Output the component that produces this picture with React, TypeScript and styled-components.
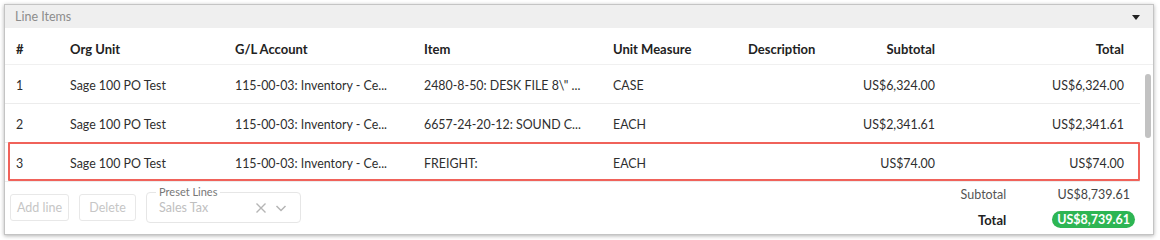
import styled, { createGlobalStyle } from "styled-components";

const GlobalStyle = createGlobalStyle`
  body {
    margin: 0;
    background: #ffffff;
    font-family: "Lato", "Liberation Sans", sans-serif;
    color: #333333;
  }
`;

const COLS = "54px 165px 189px 189px 135px 103px 106px 194px";

const Page = styled.div`
  padding: 4px 6px 5px 4px;
`;

const Panel = styled.div`
  border: 1px solid #c4c4c4;
  box-shadow: 0 1px 4px rgba(0, 0, 0, 0.3);
  background: #fff;
  height: 229px;
  display: flex;
  flex-direction: column;
`;

const PanelHeader = styled.div`
  height: 23px;
  background: #efefef;
  display: flex;
  align-items: center;
  justify-content: space-between;
  padding: 0 13px 0 10px;
  font-size: 12.5px;
  color: #8c8c8c;
`;

const Caret = styled.span`
  width: 0;
  height: 0;
  border-left: 4px solid transparent;
  border-right: 4px solid transparent;
  border-top: 5px solid #222;
  margin-top: 2px;
`;

const HeadRow = styled.div`
  display: grid;
  grid-template-columns: ${COLS} 12px;
  height: 37px;
  padding-top: 6px;
  box-sizing: border-box;
  align-items: center;
  font-size: 13px;
  font-weight: 700;
  color: #222;
  border-bottom: 1px solid #f0f0f0;
`;

const Cell = styled.div<{ $right?: boolean; $pr?: number }>`
  padding-left: 11px;
  padding-right: ${(p) => p.$pr ?? 11}px;
  text-align: ${(p) => (p.$right ? "right" : "left")};
  white-space: nowrap;
  overflow: hidden;
`;

const BodyWrap = styled.div`
  display: flex;
  height: 117px;
`;

const Rows = styled.div`
  width: 1135px;
`;

const Row = styled.div<{ $hl?: boolean }>`
  position: relative;
  display: grid;
  grid-template-columns: ${COLS};
  height: 36px;
  padding-top: 2px;
  align-items: center;
  font-size: 12.4px;
  color: #2e2e2e;
  border-bottom: 1px solid #ececec;
  &::after {
    content: "";
    display: ${(p) => (p.$hl ? "block" : "none")};
    position: absolute;
    left: 3px;
    right: 0;
    top: -1px;
    bottom: 0;
    border: 2px solid #f0625a;
    border-radius: 1px;
  }
`;

const Track = styled.div`
  width: 12px;
  padding: 9px 1px 0 5px;
`;

const Thumb = styled.div`
  width: 6px;
  height: 64px;
  border-radius: 3px;
  background: #c2c2c2;
`;

const Footer = styled.div`
  flex: 1;
  display: flex;
  justify-content: space-between;
  padding: 2px 18px 0 5px;
`;

const Actions = styled.div`
  display: flex;
  align-items: center;
  gap: 10px;
  height: 47px;
`;

const GhostButton = styled.button`
  font-family: inherit;
  font-size: 12.5px;
  color: #c6c6c6;
  background: #fff;
  border: 1px solid #e8e8e8;
  border-radius: 3px;
  height: 27px;
  min-width: 57px;
  padding: 0 6px;
`;

const SelectBox = styled.div`
  position: relative;
  width: 155px;
  height: 31px;
  border: 1px solid #e6e6e6;
  border-radius: 4px;
  display: flex;
  align-items: center;
  padding: 0 13px 0 12px;
  box-sizing: border-box;
  color: #c0c0c0;
  font-size: 12.5px;
`;

const SelectLabel = styled.span`
  position: absolute;
  top: -8px;
  left: 9px;
  padding: 0 3px;
  background: #fff;
  font-size: 11px;
  color: #777;
  line-height: 14px;
`;

const SelectText = styled.span`
  flex: 1;
`;

const Icons = styled.span`
  display: flex;
  align-items: center;
  gap: 8px;
`;

const Totals = styled.div`
  display: grid;
  grid-template-columns: auto auto;
  column-gap: 46px;
  row-gap: 7px;
  align-content: start;
  padding-top: 2px;
  font-size: 12.5px;
  line-height: 18px;
`;

const TotLabel = styled.div<{ $bold?: boolean }>`
  text-align: right;
  color: ${(p) => (p.$bold ? "#222" : "#555")};
  font-weight: ${(p) => (p.$bold ? 700 : 400)};
  font-size: ${(p) => (p.$bold ? 13 : 12.5)}px;
`;

const TotValue = styled.div<{ $pr?: number }>`
  text-align: right;
  color: #444;
  padding-right: ${(p) => p.$pr ?? 0}px;
`;

const Pill = styled.span`
  display: inline-block;
  background: #2db553;
  color: #fff;
  font-weight: 700;
  font-size: 12.5px;
  border-radius: 9px;
  padding: 0 5px;
  line-height: 17px;
`;

const lines = [
  { n: "1", item: '2480-8-50: DESK FILE 8\\" ...', unit: "CASE", sub: "US$6,324.00" },
  { n: "2", item: "6657-24-20-12: SOUND C...", unit: "EACH", sub: "US$2,341.61" },
  { n: "3", item: "FREIGHT:", unit: "EACH", sub: "US$74.00" },
];

export default function App() {
  return (
    <>
      <GlobalStyle />
      <Page>
        <Panel>
          <PanelHeader>
            <span>Line Items</span>
            <Caret />
          </PanelHeader>
          <HeadRow>
            <Cell>#</Cell>
            <Cell>Org Unit</Cell>
            <Cell>G/L Account</Cell>
            <Cell>Item</Cell>
            <Cell>Unit Measure</Cell>
            <Cell>Description</Cell>
            <Cell $right>Subtotal</Cell>
            <Cell $right $pr={16}>Total</Cell>
            <div />
          </HeadRow>
          <BodyWrap>
            <Rows>
              {lines.map((l) => (
                <Row key={l.n} $hl={l.n === "3"}>
                  <Cell>{l.n}</Cell>
                  <Cell>Sage 100 PO Test</Cell>
                  <Cell>115-00-03: Inventory - Ce...</Cell>
                  <Cell>{l.item}</Cell>
                  <Cell>{l.unit}</Cell>
                  <Cell />
                  <Cell $right>{l.sub}</Cell>
                  <Cell $right $pr={16}>{l.sub}</Cell>
                </Row>
              ))}
            </Rows>
            <Track>
              <Thumb />
            </Track>
          </BodyWrap>
          <Footer>
            <Actions>
              <GhostButton>Add line</GhostButton>
              <GhostButton>Delete</GhostButton>
              <SelectBox>
                <SelectLabel>Preset Lines</SelectLabel>
                <SelectText>Sales Tax</SelectText>
                <Icons>
                  <svg width="12" height="12" viewBox="0 0 12 12" fill="none" stroke="#b5b5b5" strokeWidth="1.4">
                    <path d="M1.5 1.5 L10.5 10.5 M10.5 1.5 L1.5 10.5" />
                  </svg>
                  <svg width="12" height="12" viewBox="0 0 12 12" fill="none" stroke="#b5b5b5" strokeWidth="1.5">
                    <path d="M1.5 4 L6 8.5 L10.5 4" />
                  </svg>
                </Icons>
              </SelectBox>
            </Actions>
            <Totals>
              <TotLabel>Subtotal</TotLabel>
              <TotValue $pr={5}>US$8,739.61</TotValue>
              <TotLabel $bold>Total</TotLabel>
              <TotValue>
                <Pill>US$8,739.61</Pill>
              </TotValue>
            </Totals>
          </Footer>
        </Panel>
      </Page>
    </>
  );
}
